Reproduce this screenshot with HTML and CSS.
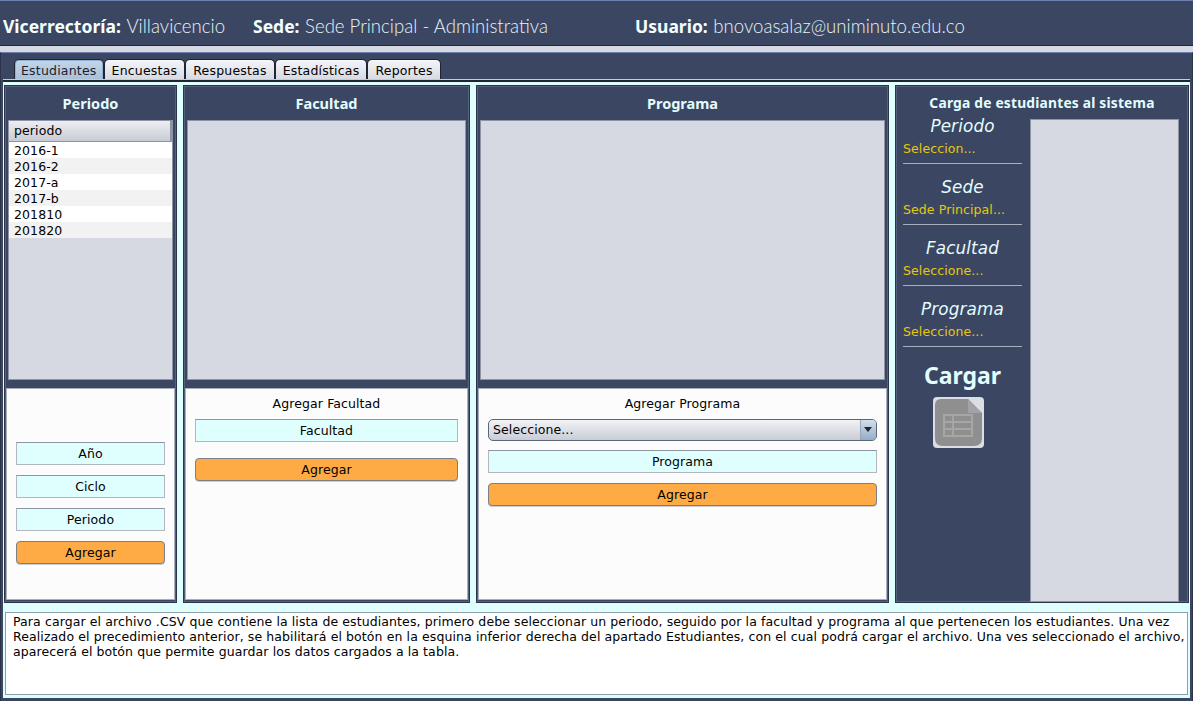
FILE: index.html
```html
<!DOCTYPE html>
<html lang="en">
<head>
  <meta charset="UTF-8">
  <meta name="viewport" content="width=device-width, initial-scale=1.0">
  <title>Estudiantes</title>
  <link rel="stylesheet" href="styles.css">
</head>
<body>
  <!-- Top bar -->
  <header class="topbar">
    <div class="topbar-item item-vice"><b>Vicerrectoría:</b> <span>Villavicencio</span></div>
    <div class="topbar-item item-sede"><b>Sede:</b> <span>Sede Principal - Administrativa</span></div>
    <div class="topbar-item"><b>Usuario:</b> <span>bnovoasalaz@uniminuto.edu.co</span></div>
  </header>

  <div class="main">
    <!-- Tabs -->
    <nav class="tabs">
      <div class="tab active">Estudiantes</div>
      <div class="tab">Encuestas</div>
      <div class="tab">Respuestas</div>
      <div class="tab">Estadísticas</div>
      <div class="tab">Reportes</div>
    </nav>

    <div class="content">
      <div class="panels">
        <!-- Periodo -->
        <section class="panel">
          <h2>Periodo</h2>
          <div class="list">
            <div class="list-head">periodo</div>
            <div class="row">2016-1</div>
            <div class="row alt">2016-2</div>
            <div class="row">2017-a</div>
            <div class="row alt">2017-b</div>
            <div class="row">201810</div>
            <div class="row alt">201820</div>
          </div>
          <div class="form form-periodo">
            <div class="field">Año</div>
            <div class="field">Ciclo</div>
            <div class="field">Periodo</div>
            <button class="btn">Agregar</button>
          </div>
        </section>

        <!-- Facultad -->
        <section class="panel">
          <h2>Facultad</h2>
          <div class="list"></div>
          <div class="form form-facultad">
            <div class="form-title">Agregar Facultad</div>
            <div class="field">Facultad</div>
            <button class="btn">Agregar</button>
          </div>
        </section>

        <!-- Programa -->
        <section class="panel">
          <h2>Programa</h2>
          <div class="list"></div>
          <div class="form form-programa">
            <div class="form-title">Agregar Programa</div>
            <div class="combo">
              <span class="combo-text">Seleccione...</span>
              <span class="combo-arrow"></span>
            </div>
            <div class="field">Programa</div>
            <button class="btn">Agregar</button>
          </div>
        </section>

        <!-- Carga -->
        <section class="panel panel-carga">
          <h2>Carga de estudiantes al sistema</h2>
          <div class="carga-body">
            <div class="carga-left">
              <div class="info">
                <div class="info-label">Periodo</div>
                <div class="info-value">Seleccion...</div>
              </div>
              <div class="info">
                <div class="info-label">Sede</div>
                <div class="info-value">Sede Principal...</div>
              </div>
              <div class="info">
                <div class="info-label">Facultad</div>
                <div class="info-value">Seleccione...</div>
              </div>
              <div class="info">
                <div class="info-label">Programa</div>
                <div class="info-value">Seleccione...</div>
              </div>
              <div class="cargar">Cargar</div>
              <div class="icon-box">
                <svg width="51" height="51" viewBox="0 0 51 51">
                  <rect width="51" height="51" rx="4" fill="#dcdee5"/>
                  <path d="M8 2H35L49 16V41Q49 49 41 49H10Q2 49 2 41V8Q2 2 8 2Z" fill="#8f8f8f"/>
                  <path d="M35 2L49 16H35Z" fill="#a3a3a5"/>
                  <path d="M11 18H39V39H11ZM11 25H39M11 32H39M20 18V39" fill="none" stroke="#a6a6a6" stroke-width="2"/>
                </svg>
              </div>
            </div>
            <div class="carga-list"></div>
          </div>
        </section>
      </div>

      <!-- Help text -->
      <div class="note">Para cargar el archivo .CSV que contiene la lista de estudiantes, primero debe seleccionar un periodo, seguido por la facultad y programa al que pertenecen los estudiantes. Una vez Realizado el precedimiento anterior, se habilitará el botón en la esquina inferior derecha del apartado Estudiantes, con el cual podrá cargar el archivo. Una ves seleccionado el archivo, aparecerá el botón que permite guardar los datos cargados a la tabla.</div>
    </div>
  </div>
</body>
</html>
```

FILE: styles.css
```css
* {
  box-sizing: border-box;
}

html, body {
  height: 100%;
}

body {
  margin: 0;
  width: 1193px;
  height: 701px;
  overflow: hidden;
  display: flex;
  flex-direction: column;
  background-color: #d6d9e2;
  font-family: "DejaVu Sans", sans-serif;
  font-size: 12.5px;
  letter-spacing: 0.1px;
  color: #000;
}

/* Top bar */
.topbar {
  height: 46px;
  display: flex;
  align-items: center;
  padding: 6px 0 0 3px;
  background-color: #3b4762;
  border-top: 1px solid #6d7fae;
  border-bottom: 1px solid #1f2533;
  color: #fff;
  font-family: "Noto Sans", sans-serif;
  font-size: 17.5px;
  letter-spacing: 0;
}

.topbar-item b {
  color: #f4ffff;
  margin-right: 1px;
}

.topbar-item span {
  font-family: "Lato", sans-serif;
  font-weight: 300;
  font-size: 18.6px;
  color: #e6f4f8;
}

.item-vice {
  width: 250px;
}

.item-sede {
  width: 382px;
}

/* Main area */
.main {
  flex: 1;
  margin-top: 6px;
  display: flex;
  flex-direction: column;
  background-color: #3b4762;
  border-top: 1px solid #6d7fae;
  border-left: 1px solid #2b3448;
  border-right: 1px solid #2b3448;
  padding: 0 2px 3px 2px;
}

.tabs {
  height: 27px;
  display: flex;
  align-items: flex-end;
  padding-left: 11px;
}

.tab {
  height: 21px;
  padding: 0 7px;
  display: flex;
  align-items: center;
  justify-content: center;
  background: linear-gradient(#f4f5f8, #d6d9e2);
  border: 1px solid #1f2533;
  border-bottom: none;
  border-radius: 5px 5px 0 0;
  letter-spacing: 0.2px;
}

.tab.active {
  padding: 0 6px;
  background: linear-gradient(#c4d5e6, #a9c0d8);
  box-shadow: inset 0 0 0 1px #8db0d4;
  color: #1a2230;
}

.content {
  flex: 1;
  display: flex;
  flex-direction: column;
  background-color: #dfffff;
  border-top: 2px solid #1f2533;
  box-shadow: 0 -1px 0 #b9cfe6;
  padding: 3px 0 3px 1px;
}

.panels {
  display: grid;
  grid-template-columns: 173px 287px 413px 294px;
  column-gap: 6px;
  height: 518px;
}

.panel {
  display: flex;
  flex-direction: column;
  background-color: #3b4762;
  border: 1px solid #2b3448;
  box-shadow: inset 0 0 0 1px #55607a;
  padding-bottom: 1px;
}

.panel h2 {
  margin: 0;
  height: 34px;
  flex: none;
  display: flex;
  align-items: center;
  justify-content: center;
  font-family: "Noto Sans", sans-serif;
  font-size: 14.5px;
  font-weight: 700;
  letter-spacing: 0;
  color: #e4fdff;
}

.list {
  height: 260px;
  margin: 0 3px;
  flex: none;
  background-color: #d6d9e2;
  border: 1px solid #8e94a4;
}

.list-head {
  height: 21px;
  padding-left: 5px;
  line-height: 20px;
  background: linear-gradient(#eceef2, #c9ccd5);
  border-right: 2px solid #8e94a4;
  border-bottom: 1px solid #8e94a4;
}

.row {
  height: 16px;
  padding-left: 5px;
  line-height: 18px;
  background-color: #fff;
}

.row.alt {
  background-color: #f2f2f2;
}

.form {
  flex: 1;
  margin: 8px 1px 1px;
  display: flex;
  flex-direction: column;
  background-color: #fcfcfc;
  border: 1px solid #a9aebc;
}

.form-periodo {
  padding: 53px 9px 0;
  gap: 10px;
}

.form-facultad {
  padding: 7px 9px 0;
}

.form-programa {
  padding: 7px 9px 0;
}

.form-title {
  text-align: center;
  height: 15px;
  line-height: 15px;
  margin-bottom: 8px;
}

.field {
  height: 23px;
  line-height: 22px;
  text-align: center;
  background-color: #dfffff;
  border: 1px solid #b2b6bf;
  border-top-color: #8e94a4;
}

.btn {
  height: 23px;
  padding: 0;
  font: inherit;
  letter-spacing: inherit;
  color: #000;
  background-color: #ffab45;
  border: 1px solid #7d7f84;
  border-radius: 4px;
  box-shadow: 0 1px 0 #c9ccd5;
}

.form-facultad .btn {
  margin-top: 16px;
}

.form-programa .field {
  margin-top: 9px;
}

.form-programa .btn {
  margin-top: 10px;
}

.combo {
  height: 22px;
  display: flex;
  background: linear-gradient(#f2f3f6, #c9ccd6);
  border: 1px solid #5d6679;
  border-radius: 5px;
  overflow: hidden;
}

.combo-text {
  flex: 1;
  padding-left: 4px;
  line-height: 19px;
}

.combo-arrow {
  width: 16px;
  position: relative;
  background: linear-gradient(#d2dfeb, #93adc7);
  border-left: 1px solid #9aa6b6;
}

.combo-arrow::after {
  content: "";
  position: absolute;
  left: 3px;
  top: 7px;
  border-left: 4px solid transparent;
  border-right: 4px solid transparent;
  border-top: 5px solid #1f2533;
}

/* Carga panel */
.panel-carga {
  padding-bottom: 0;
}

.panel-carga h2 {
  height: 33px;
  font-size: 13.8px;
  letter-spacing: 0.2px;
}

.carga-body {
  flex: 1;
  display: flex;
  padding-left: 7px;
}

.carga-left {
  width: 119px;
  margin-right: 8px;
  display: flex;
  flex-direction: column;
}

.info {
  height: 61px;
  border-bottom: 1px solid #a9aebc;
}

.info:first-child {
  height: 45px;
}

.info:not(:first-child) {
  padding-top: 14px;
}

.info-label {
  height: 19px;
  line-height: 19px;
  text-align: center;
  font-style: italic;
  font-size: 16.8px;
  letter-spacing: 0.15px;
  color: #e4fdff;
}

.info:first-child .info-label {
  margin-top: -2px;
}

.info-value {
  margin-top: 5px;
  line-height: 15px;
  color: #e5c80e;
}

.cargar {
  margin-top: 12px;
  text-align: center;
  font-family: "Noto Sans", sans-serif;
  font-size: 23px;
  font-weight: 700;
  line-height: 32px;
  letter-spacing: 0;
  color: #e4fdff;
}

.icon-box {
  margin: 6px 0 0 30px;
  height: 51px;
}

.carga-list {
  width: 149px;
  background-color: #d6d9e2;
  border: 1px solid #8e94a4;
}

/* Help text */
.note {
  height: 83px;
  margin: 9px 0 0 1px;
  width: 1183px;
  padding: 1px 2px 1px 7px;
  line-height: 15px;
  background-color: #fff;
  border: 1px solid #8fa0ab;
}
```
